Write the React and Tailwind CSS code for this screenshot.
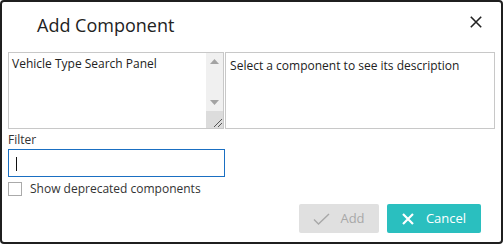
import React, { useState } from 'react';

const ScrollArrow = ({ up }) => (
    <svg width="9" height="5" viewBox="0 0 9 5">
        <path d={up ? 'M0 5L4.5 0L9 5Z' : 'M0 0L4.5 5L9 0Z'} fill="#a3a3a3" />
    </svg>
);

const App = () => {
    const [filter, setFilter] = useState('');
    const [showDeprecated, setShowDeprecated] = useState(false);

    return (
        <div className="w-[503px] h-[244px] bg-white" style={{ fontFamily: '"Open Sans", "Noto Sans", sans-serif' }}>
            <div className="w-full h-full border-2 border-[#1f1f1f] rounded-[4px] flex flex-col text-[#333]">
                {/* Header */}
                <div className="h-[50px] flex items-start justify-between pl-[35px] pr-[19px]">
                    <h3 className="mt-[10px] text-[18px] leading-[26px] text-[#222]">Add Component</h3>
                    <button className="mt-[14px] w-[12px] h-[12px] flex items-center justify-center">
                        <svg width="12" height="12" viewBox="0 0 12 12">
                            <path d="M0.8 0.8L11.2 11.2M11.2 0.8L0.8 11.2" stroke="#222" strokeWidth="1.6" />
                        </svg>
                    </button>
                </div>

                <div className="px-[6px] flex flex-col">
                    {/* Component list + description */}
                    <div className="flex gap-[1px] h-[77px]">
                        <div className="w-[217px] h-[77px] border border-[#c8c8c8] flex">
                            <div className="flex-1 pl-[3px] pt-[3px] text-[12px] leading-[16px] text-[#222]">
                                Vehicle Type Search Panel
                            </div>
                            <div className="w-[17px] bg-[#f0f0f0] flex flex-col">
                                <div className="h-[17px] flex items-center justify-center">
                                    <ScrollArrow up />
                                </div>
                                <div className="flex-1 flex items-end justify-center pb-[6px]">
                                    <ScrollArrow />
                                </div>
                                <div className="h-[17px] bg-[#dcdcdc] flex items-end justify-end">
                                    <svg width="12" height="12" viewBox="0 0 12 12">
                                        <path d="M3 11L11 3M7 11L11 7" stroke="#555" strokeWidth="1" />
                                    </svg>
                                </div>
                            </div>
                        </div>
                        <div className="w-[271px] h-[77px] border border-[#c8c8c8] pl-[4px] pt-[5px] text-[12px] leading-[16px] text-[#222]">
                            Select a component to see its description
                        </div>
                    </div>

                    {/* Filter */}
                    <label className="mt-[3px] text-[12px] leading-[16px] text-[#333]">Filter</label>
                    <div className="relative mt-[1px] w-[217px]">
                        <input
                            value={filter}
                            onChange={(e) => setFilter(e.target.value)}
                            className="w-[217px] h-[28px] border border-[#1a6fc2] outline-none px-[7px] text-[13px] text-[#222]"
                        />
                        {filter === '' && (
                            <span className="absolute left-[8px] top-[8px] w-[1px] h-[14px] bg-[#111] pointer-events-none"></span>
                        )}
                    </div>

                    <label className="mt-[4px] flex items-center gap-[8px] text-[12px] leading-[16px] text-[#333] cursor-pointer">
                        <input
                            type="checkbox"
                            checked={showDeprecated}
                            onChange={(e) => setShowDeprecated(e.target.checked)}
                            className="appearance-none w-[14px] h-[14px] border-[1.5px] border-[#aaa] bg-white"
                        />
                        Show deprecated components
                    </label>
                </div>

                {/* Actions */}
                <div className="mt-auto mb-[9px] flex justify-end gap-[8px] pr-[20px]">
                    <button
                        disabled
                        className="w-[80px] h-[29px] rounded-[2px] bg-[#e0e0e0] text-[#a8a8a8] text-[13px] flex items-center justify-center gap-[10px]"
                    >
                        <svg width="17" height="12" viewBox="0 0 17 12">
                            <path d="M1 6.5L5.5 11L16 1" fill="none" stroke="#a8a8a8" strokeWidth="1.4" />
                        </svg>
                        Add
                    </button>
                    <button className="w-[94px] h-[29px] rounded-[2px] bg-[#2abfbf] text-white text-[13px] flex items-center justify-center gap-[12px]">
                        <svg width="12" height="12" viewBox="0 0 12 12">
                            <path d="M1 1L11 11M11 1L1 11" stroke="#fff" strokeWidth="2.2" />
                        </svg>
                        Cancel
                    </button>
                </div>
            </div>
        </div>
    );
};

export default App;
